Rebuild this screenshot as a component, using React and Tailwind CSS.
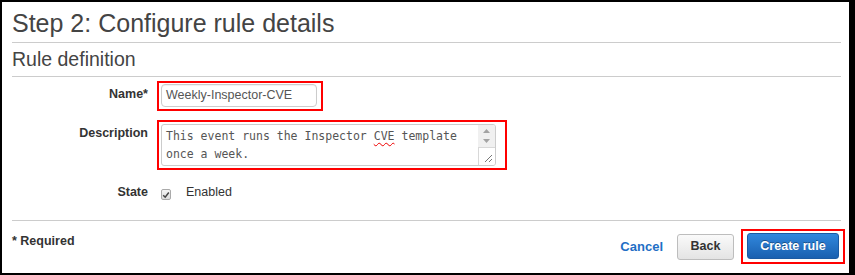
export default function App() {
  return (
    <div className="w-[855px] h-[275px] bg-white border-solid border-black border-t-2 border-l-2 border-b-2 border-r-[6px] font-['Liberation_Sans',Arial,sans-serif] text-[#333] overflow-hidden">
      <div className="pl-[10px] pr-[4px]">
        <div className="mt-[6px] h-[30px] text-[25px] leading-[30px] text-[#444] whitespace-nowrap">Step 2: Configure rule details</div>
        <div className="mt-[4px] mr-[4px] h-px bg-[#ccc]" />
        <div className="mt-[4px] h-[24px] text-[19.5px] leading-[24px] text-[#444] whitespace-nowrap">Rule definition</div>
        <div className="mt-[5px] mr-[4px] h-px bg-[#ccc]" />

        {/* Name row */}
        <div className="mt-[4px] flex items-start">
          <div className="w-[136px] mt-[5px] text-right text-[12.5px] leading-[16px] font-bold text-[#333]">Name*</div>
          <div className="ml-[9px] border-2 border-[#f00] pl-[2px] pt-[1px] pr-[4px] pb-[2px]">
            <div className="w-[156px] h-[23px] border border-[#ccc] rounded-[4px] bg-white flex items-center pl-[4px] text-[12.5px] text-[#555] whitespace-nowrap shadow-[inset_0_1px_1px_rgba(0,0,0,0.06)]">
              Weekly-Inspector-CVE
            </div>
          </div>
        </div>

        {/* Description row */}
        <div className="mt-[9px] flex items-start">
          <div className="w-[136px] mt-[5px] text-right text-[12.5px] leading-[16px] font-bold text-[#333]">Description</div>
          <div className="ml-[9px] border-2 border-[#f00] pl-[2px] pt-[2px] pr-[9px] pb-[2px]">
            <div className="relative w-[335px] h-[42px] border border-[#ccc] rounded-[3px] bg-white overflow-hidden">
              <div className="pl-[4px] pt-[2px] font-['DejaVu_Sans_Mono',monospace] text-[11.5px] leading-[18px] text-[#555] whitespace-pre">
                <div>
                  This event runs the Inspector{" "}
                  <span className="underline decoration-wavy decoration-[#e00] decoration-1 underline-offset-[2px]">CVE</span>
                  {" "}template
                </div>
                <div>once a week.</div>
              </div>
              {/* scrollbar */}
              <div className="absolute right-0 top-0 w-[17px] h-full flex flex-col">
                <div className="h-[22px] bg-[#f0f0f0] flex flex-col items-center pt-[3px]">
                  <svg width="9" height="6" viewBox="0 0 9 6"><path d="M4.5 1 L8 5 L1 5 Z" fill="#a3a3a3" /></svg>
                  <svg className="mt-[4px]" width="9" height="6" viewBox="0 0 9 6"><path d="M1 1 L8 1 L4.5 5 Z" fill="#a3a3a3" /></svg>
                </div>
                <div className="flex-1 bg-white border-l border-t border-[#d8d8d8] relative">
                  <svg className="absolute right-[2px] bottom-[2px]" width="11" height="11" viewBox="0 0 11 11">
                    <path d="M10 3 L3 10 M10 7 L7 10" stroke="#777" strokeWidth="1" />
                  </svg>
                </div>
              </div>
            </div>
          </div>
        </div>

        {/* State row */}
        <div className="mt-[12px] h-[20px] flex items-start">
          <div className="w-[136px] mt-[2px] text-right text-[12.5px] leading-[16px] font-bold text-[#333]">State</div>
          <div className="ml-[13px] mt-[7px] w-[10px] h-[11px] border border-[#aaa] rounded-[2px] bg-gradient-to-b from-[#f4f4f4] to-[#dcdcdc] flex items-center justify-center">
            <svg width="8" height="8" viewBox="0 0 8 8"><path d="M1.2 4.2 L3.2 6.2 L6.8 1.5" stroke="#444" strokeWidth="1.5" fill="none" /></svg>
          </div>
          <div className="ml-[15px] mt-[2px] text-[12.5px] leading-[16px] text-[#333]">Enabled</div>
        </div>

        <div className="mt-[18px] mr-[4px] h-px bg-[#ccc]" />

        {/* Footer */}
        <div className="mt-[8px] flex items-start justify-between">
          <div className="mt-[4px] text-[12.5px] leading-[16px] font-bold text-[#333]">* Required</div>
          <div className="flex items-center">
            <span className="text-[13px] leading-[16px] font-bold text-[#1f6fc5]">Cancel</span>
            <div className="ml-[14px] w-[57px] h-[26px] border border-[#bdbdbd] rounded-[3px] bg-gradient-to-b from-[#fafafa] to-[#e4e4e4] flex items-center justify-center text-[12.5px] font-bold text-[#333]">
              Back
            </div>
            <div className="ml-[7px] border-2 border-[#f00] px-[4px] pt-[2px] pb-[3px]">
              <div className="w-[92px] h-[26px] border border-[#1b5aa3] rounded-[3px] bg-gradient-to-b from-[#3188dd] to-[#1a60b0] flex items-center justify-center text-[12.5px] font-bold text-white [text-shadow:0_-1px_0_rgba(0,0,0,0.35)]">
                Create rule
              </div>
            </div>
          </div>
        </div>
      </div>
    </div>
  );
}
